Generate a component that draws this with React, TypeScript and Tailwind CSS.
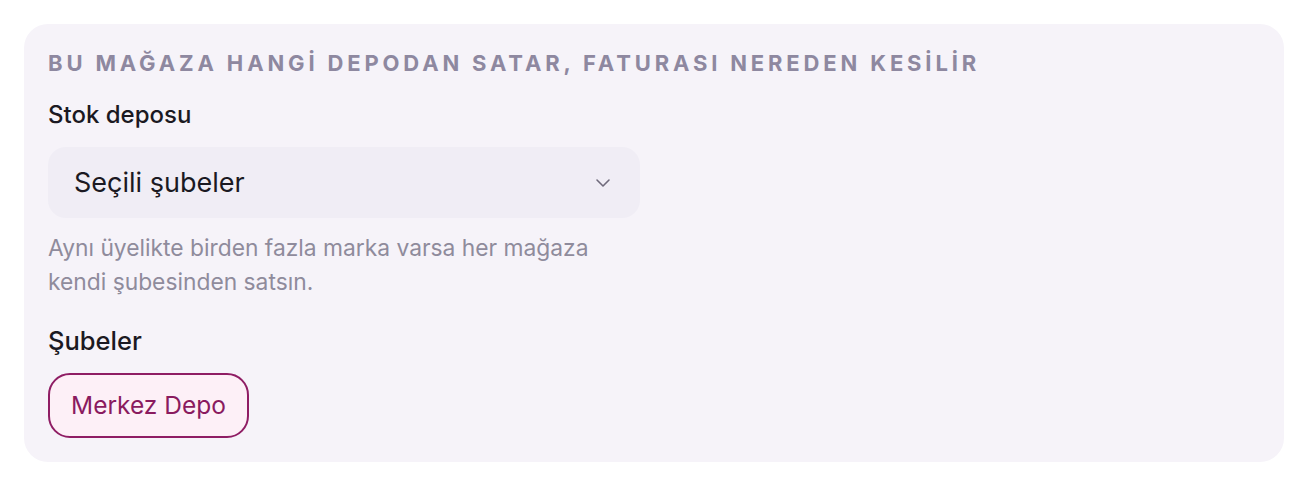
import React from "react";

export default function App() {
  return (
    <div className="w-[1308px] h-[486px] bg-white p-6" style={{ fontFamily: "Inter, 'Noto Sans', sans-serif" }}>
      <div className="h-[438px] rounded-[24px] bg-[#f6f3f9] px-6 pt-[24px]">
        <div className="text-[22px] leading-[30px] font-bold uppercase tracking-[0.175em] text-[#8e88a0] whitespace-nowrap">
          BU MAĞAZA HANGİ DEPODAN SATAR, FATURASI NEREDEN KESİLİR
        </div>
        <div className="mt-[22px] text-[24px] leading-[30px] font-medium text-[#1b1922]">Stok deposu</div>
        <div className="mt-[17px] flex h-[71px] w-[592px] items-center justify-between rounded-[18px] bg-[#f0edf5] pl-[26px] pr-[29px]">
          <span className="text-[27px] leading-[34px] text-[#1b1922]">Seçili şubeler</span>
          <svg width="16" height="10" viewBox="0 0 16 10" fill="none">
            <path d="M2 2l6 6 6-6" stroke="#6f6a7b" strokeWidth="1.6" strokeLinecap="round" strokeLinejoin="round" />
          </svg>
        </div>
        <div className="mt-[13px] w-[570px] text-[22.8px] leading-[34px] text-[#8f8b9c]">
          Aynı üyelikte birden fazla marka varsa her mağaza kendi şubesinden satsın.
        </div>
        <div className="mt-[27px] text-[25.5px] leading-[30px] font-medium text-[#1b1922]">Şubeler</div>
        <div className="mt-[17px] flex">
          <div className="flex h-[65px] items-center rounded-[22px] border-2 border-[#8f1d64] bg-[#fdf0f7] px-[21px] text-[24.5px] text-[#8a1b5f]">
            Merkez Depo
          </div>
        </div>
      </div>
    </div>
  );
}
